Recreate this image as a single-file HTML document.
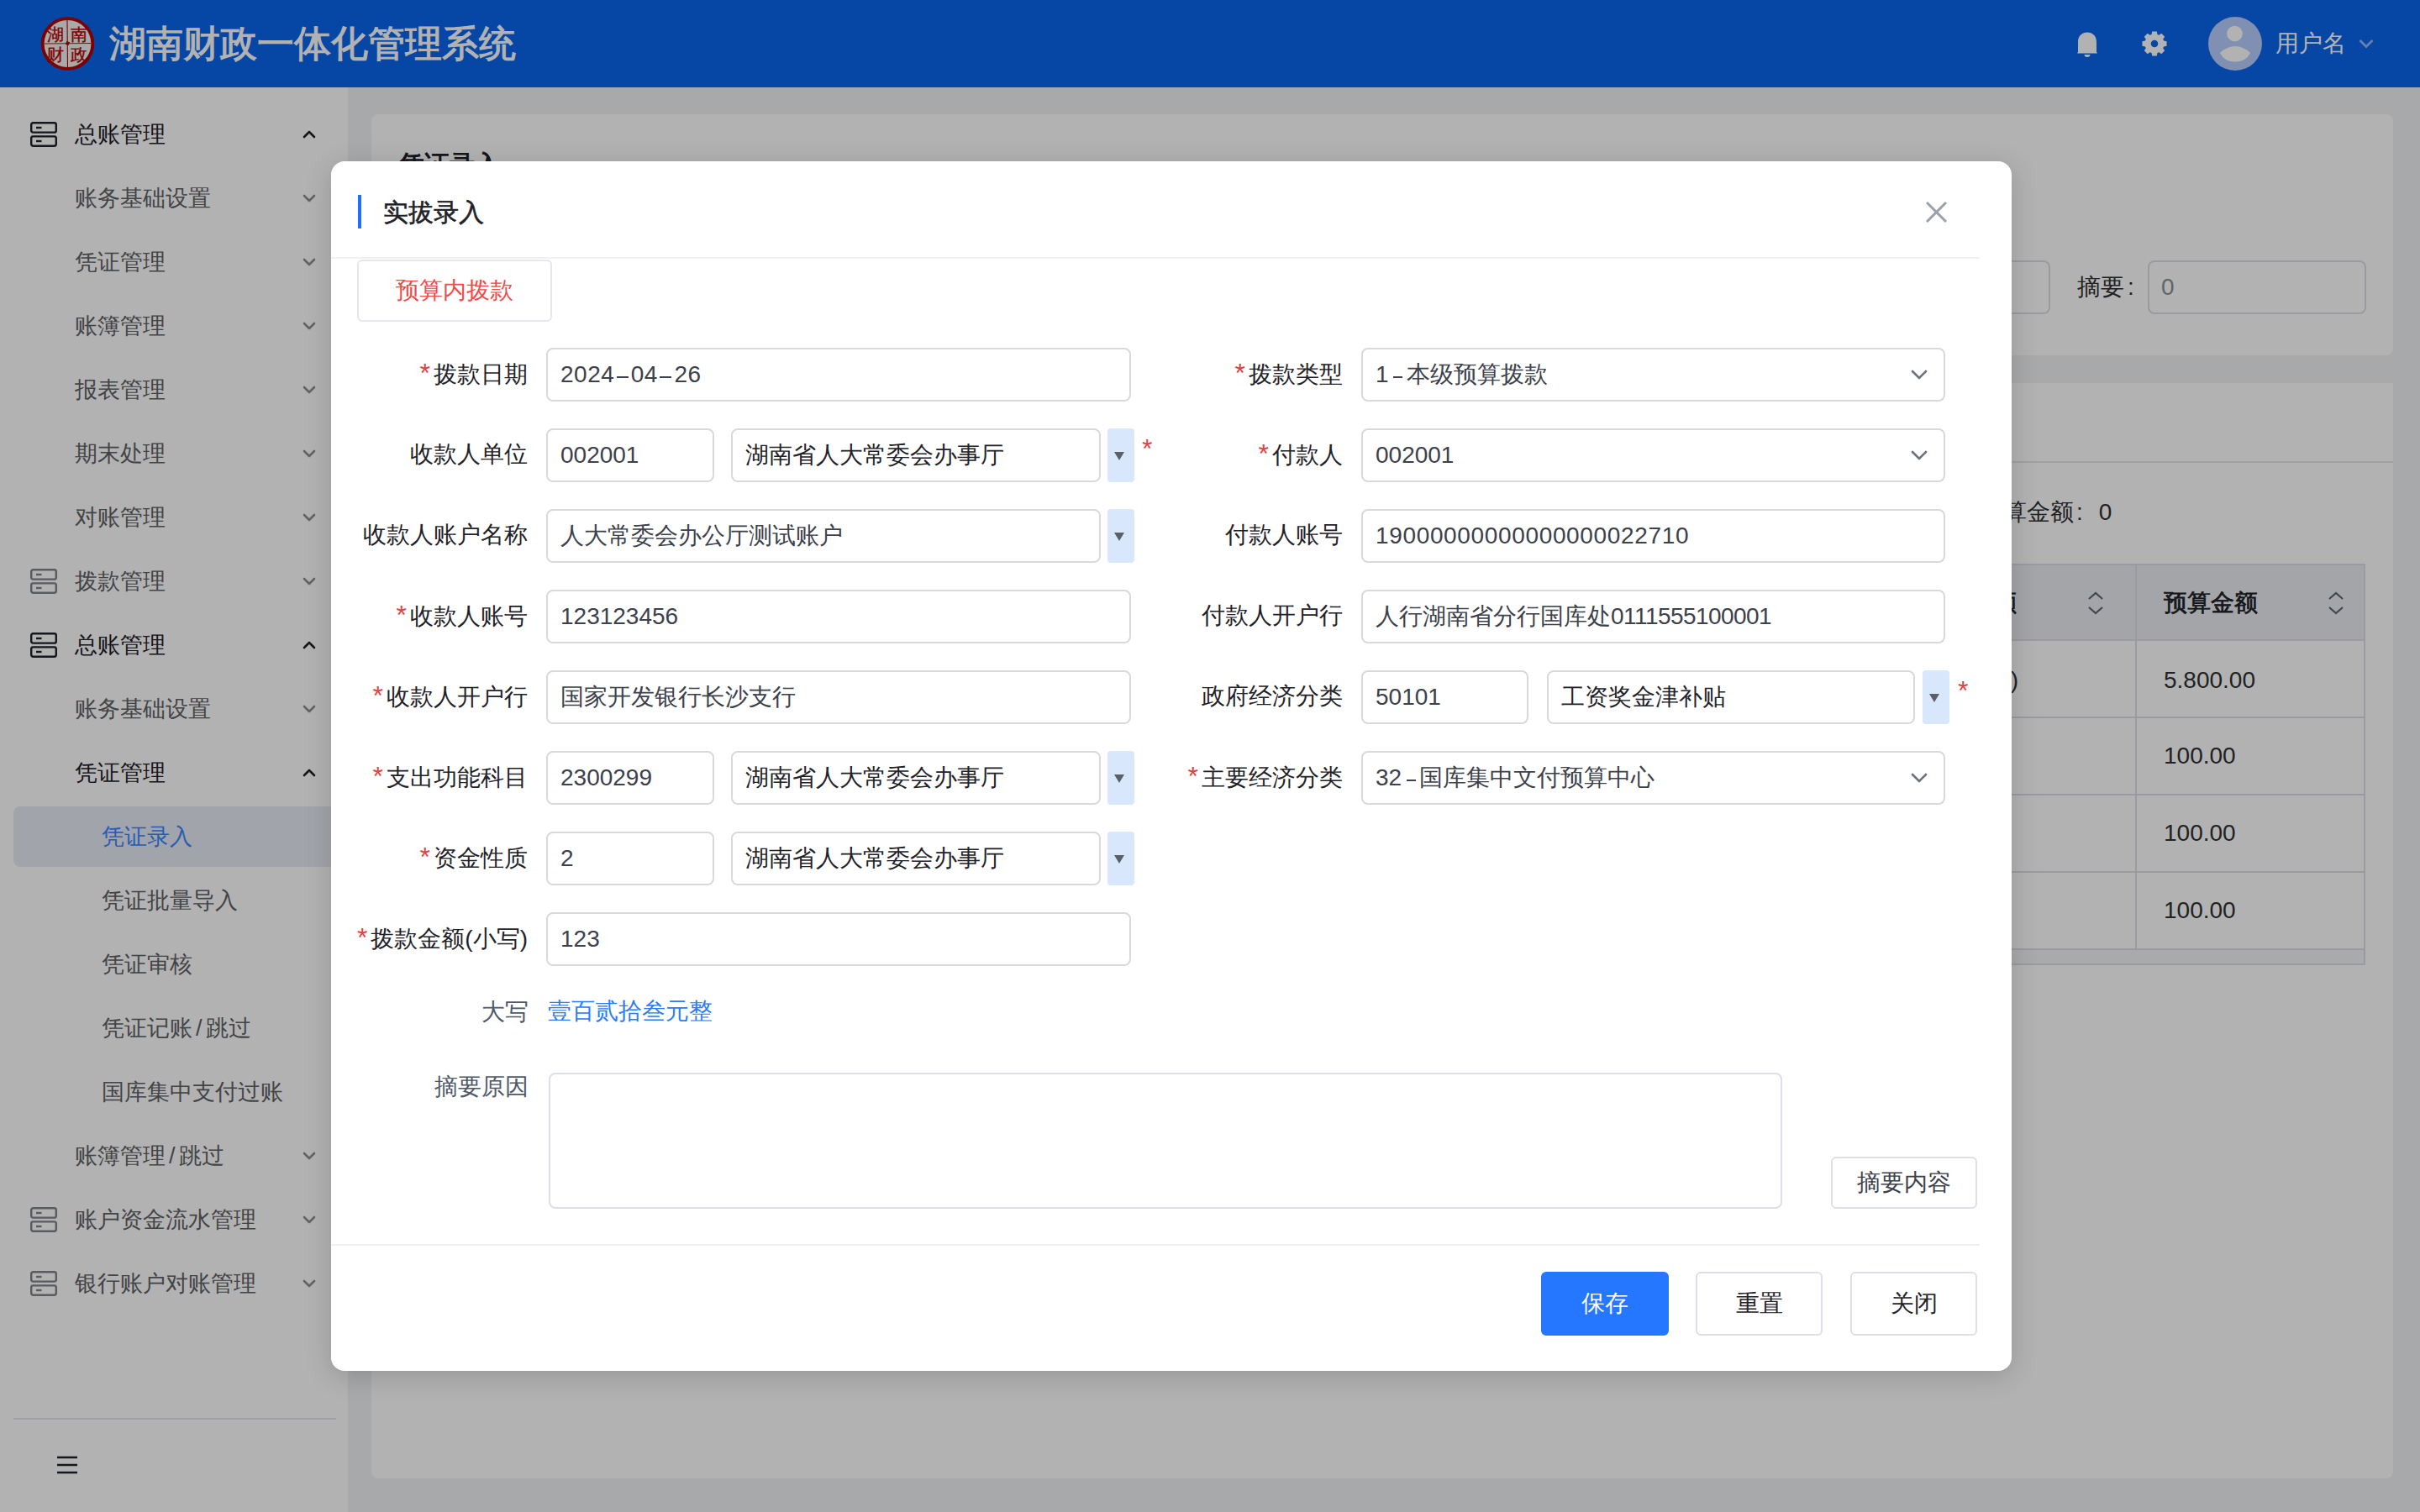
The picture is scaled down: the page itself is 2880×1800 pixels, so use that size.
<!DOCTYPE html>
<html><head><meta charset="utf-8"><title>实拔录入</title>
<style>
*{box-sizing:border-box;margin:0;padding:0}
html,body{width:2880px;height:1800px;overflow:hidden}
body{position:relative;background:#f0f2f5;font-family:"Liberation Sans",sans-serif;color:#1f2329}
.a{position:absolute}
#hdr{position:absolute;left:0;top:0;width:2880px;height:104px;background:#0a65ed}
#title{position:absolute;left:130px;top:22px;height:60px;line-height:60px;font-size:44px;color:#fff;-webkit-text-stroke:1.1px #fff;white-space:nowrap}
#uname{position:absolute;left:2708px;top:32px;height:40px;line-height:40px;font-size:28px;color:#fff;white-space:nowrap}
#side{position:absolute;left:0;top:104px;width:416px;height:1696px;background:#fff;border-right:2px solid #f3f3f3}
.mi{position:absolute;height:76px;line-height:76px;font-size:27px;white-space:nowrap}
.mi.dark{color:#1d2129}
.mi.gray{color:#606266}
.mi.active{color:#3a86ff}
.mact{position:absolute;left:16px;width:400px;height:72px;background:#e7ecf5;border-radius:8px 0 0 8px}
.micon{position:absolute;left:36px;fill:none;stroke-width:2.4}
.micon.dark{stroke:#1d2129}
.micon.gray{stroke:#7f848c}
.chev{position:absolute;left:360px;fill:none;stroke-width:2.6;stroke-linecap:round;stroke-linejoin:round}
.chev.dark{stroke:#1d2129}
.chev.gray{stroke:#8a8f97}
#mask{position:absolute;left:0;top:0;width:2880px;height:1800px;background:rgba(0,0,0,0.3)}
.card{position:absolute;background:#fff;border-radius:8px}
#modal{position:absolute;left:394px;top:192px;width:2000px;height:1440px;background:#fff;border-radius:16px;box-shadow:0 6px 32px rgba(0,0,0,0.17)}
.lbl{position:absolute;height:64px;line-height:61px;font-size:28px;color:#1f2329;text-align:right;white-space:nowrap}
.req{color:#dc4444;font-size:32px;margin-right:4px}
.inp{position:absolute;height:64px;border:2px solid #d9d9d9;border-radius:8px;background:#fff;line-height:60px;padding-left:15px;font-size:28px;color:#3c414b;white-space:nowrap;overflow:hidden}
.inp.dk{color:#1f2329}
.ddb{position:absolute;width:32px;height:64px;background:#d9e7fd;border-radius:4px}
.ddb:after{content:"";position:absolute;left:8px;top:28px;border-left:6.5px solid transparent;border-right:6.5px solid transparent;border-top:10px solid #5b5f6a}
.dh{display:inline-block;height:2.2px;background:currentColor;vertical-align:middle;position:relative;top:1px}
.star{position:absolute;font-size:32px;color:#dc4444;line-height:28px}
.sel{position:absolute;fill:none;stroke:#6b7280;stroke-width:2.6;stroke-linecap:round;stroke-linejoin:round}
.btn{position:absolute;height:76px;line-height:72px;border:2px solid #dcdfe6;border-radius:6px;text-align:center;font-size:28px;color:#1f2329;background:#fff}
</style></head><body>
<div id="hdr">
<svg class="a" style="left:48px;top:20px" width="65" height="65" viewBox="0 0 65 65">
<circle cx="32.5" cy="32" r="29.8" fill="#f2f2f2" stroke="#b40000" stroke-width="3.8"/>
<line x1="32" y1="4" x2="32.5" y2="61" stroke="#b40000" stroke-width="1.1"/>
<line x1="5" y1="32" x2="60" y2="31.5" stroke="#b40000" stroke-width="0.9"/>
<g font-family="serif" font-size="20" fill="#b40000" stroke="#b40000" stroke-width="0.35" text-anchor="middle">
<text x="18" y="28">湖</text><text x="46" y="28">南</text><text x="18" y="52">财</text><text x="46" y="52">政</text>
</g>
<rect x="30.5" y="29.5" width="4" height="4" fill="#b40000" transform="rotate(20 32.5 31.5)"/>
</svg>
<div id="title">湖南财政一体化管理系统</div>
<svg class="a" style="left:2470px;top:36px" width="28" height="34" viewBox="0 0 28 34">
<path d="M3 26 L3 14 C3 6.5 8 2.5 14 2.5 C20 2.5 25 6.5 25 14 L25 26 L25.8 27 L25.8 27.5 L2.2 27.5 L2.2 27 Z" fill="#fff"/>
<path d="M10.5 29 L17.5 29 C17.5 31 16 32 14 32 C12 32 10.5 31 10.5 29 Z" fill="#fff"/>
</svg>
<svg class="a" style="left:2548px;top:36px" width="32" height="32" viewBox="0 0 32 32" id="gear"><path d="M12.57 4.92 L13.20 1.47 L18.80 1.47 L19.43 4.92 L21.41 5.74 L24.30 3.75 L28.25 7.70 L26.26 10.59 L27.08 12.57 L30.53 13.20 L30.53 18.80 L27.08 19.43 L26.26 21.41 L28.25 24.30 L24.30 28.25 L21.41 26.26 L19.43 27.08 L18.80 30.53 L13.20 30.53 L12.57 27.08 L10.59 26.26 L7.70 28.25 L3.75 24.30 L5.74 21.41 L4.92 19.43 L1.47 18.80 L1.47 13.20 L4.92 12.57 L5.74 10.59 L3.75 7.70 L7.70 3.75 L10.59 5.74 Z M20.3 16 A4.3 4.3 0 1 0 11.7 16 A4.3 4.3 0 1 0 20.3 16 Z" fill="#fff" fill-rule="evenodd"/></svg>
<svg class="a" style="left:2628px;top:20px" width="64" height="64" viewBox="0 0 64 64">
<circle cx="32" cy="32" r="32" fill="#b6cfff"/>
<circle cx="31.5" cy="20" r="9.3" fill="#fff"/>
<path d="M13.7 43 Q32 27 50.3 43 Q44 54 32 53.6 Q20 54 13.7 43 Z" fill="#fff"/>
</svg>
<div id="uname">用户名</div>
<svg class="a" style="left:2806px;top:45px" width="20" height="14" viewBox="0 0 20 14"><path d="M2.5 3 L10 10.5 L17.5 3" fill="none" stroke="#fff" stroke-opacity="0.55" stroke-width="2.8"/></svg>
</div>
<div id="side"></div>
<svg class="micon dark" style="top:145px" width="32" height="30" viewBox="0 0 32 30"><rect x="1.2" y="1.2" width="29.6" height="11.4" rx="2.2"/><rect x="1.2" y="17.4" width="29.6" height="11.4" rx="2.2"/><line x1="7" y1="7" x2="13.5" y2="7"/><line x1="7" y1="23" x2="13.5" y2="23"/></svg><div class="mi dark" style="top:122px;left:89px">总账管理</div><svg class="chev dark" style="top:154px" width="16" height="12" viewBox="0 0 16 12"><path d="M2 9 L8 3 L14 9"/></svg>
<div class="mi gray" style="top:198px;left:89px">账务基础设置</div><svg class="chev gray" style="top:230px" width="16" height="12" viewBox="0 0 16 12"><path d="M2 3 L8 9 L14 3"/></svg>
<div class="mi gray" style="top:274px;left:89px">凭证管理</div><svg class="chev gray" style="top:306px" width="16" height="12" viewBox="0 0 16 12"><path d="M2 3 L8 9 L14 3"/></svg>
<div class="mi gray" style="top:350px;left:89px">账簿管理</div><svg class="chev gray" style="top:382px" width="16" height="12" viewBox="0 0 16 12"><path d="M2 3 L8 9 L14 3"/></svg>
<div class="mi gray" style="top:426px;left:89px">报表管理</div><svg class="chev gray" style="top:458px" width="16" height="12" viewBox="0 0 16 12"><path d="M2 3 L8 9 L14 3"/></svg>
<div class="mi gray" style="top:502px;left:89px">期末处理</div><svg class="chev gray" style="top:534px" width="16" height="12" viewBox="0 0 16 12"><path d="M2 3 L8 9 L14 3"/></svg>
<div class="mi gray" style="top:578px;left:89px">对账管理</div><svg class="chev gray" style="top:610px" width="16" height="12" viewBox="0 0 16 12"><path d="M2 3 L8 9 L14 3"/></svg>
<svg class="micon gray" style="top:677px" width="32" height="30" viewBox="0 0 32 30"><rect x="1.2" y="1.2" width="29.6" height="11.4" rx="2.2"/><rect x="1.2" y="17.4" width="29.6" height="11.4" rx="2.2"/><line x1="7" y1="7" x2="13.5" y2="7"/><line x1="7" y1="23" x2="13.5" y2="23"/></svg><div class="mi gray" style="top:654px;left:89px">拨款管理</div><svg class="chev gray" style="top:686px" width="16" height="12" viewBox="0 0 16 12"><path d="M2 3 L8 9 L14 3"/></svg>
<svg class="micon dark" style="top:753px" width="32" height="30" viewBox="0 0 32 30"><rect x="1.2" y="1.2" width="29.6" height="11.4" rx="2.2"/><rect x="1.2" y="17.4" width="29.6" height="11.4" rx="2.2"/><line x1="7" y1="7" x2="13.5" y2="7"/><line x1="7" y1="23" x2="13.5" y2="23"/></svg><div class="mi dark" style="top:730px;left:89px">总账管理</div><svg class="chev dark" style="top:762px" width="16" height="12" viewBox="0 0 16 12"><path d="M2 9 L8 3 L14 9"/></svg>
<div class="mi gray" style="top:806px;left:89px">账务基础设置</div><svg class="chev gray" style="top:838px" width="16" height="12" viewBox="0 0 16 12"><path d="M2 3 L8 9 L14 3"/></svg>
<div class="mi dark" style="top:882px;left:89px">凭证管理</div><svg class="chev dark" style="top:914px" width="16" height="12" viewBox="0 0 16 12"><path d="M2 9 L8 3 L14 9"/></svg>
<div class="mact" style="top:960px"></div><div class="mi active" style="top:958px;left:121px">凭证录入</div>
<div class="mi gray" style="top:1034px;left:121px">凭证批量导入</div>
<div class="mi gray" style="top:1110px;left:121px">凭证审核</div>
<div class="mi gray" style="top:1186px;left:121px">凭证记账<span style="margin:0 4px">/</span>跳过</div>
<div class="mi gray" style="top:1262px;left:121px">国库集中支付过账</div>
<div class="mi gray" style="top:1338px;left:89px">账簿管理<span style="margin:0 4px">/</span>跳过</div><svg class="chev gray" style="top:1370px" width="16" height="12" viewBox="0 0 16 12"><path d="M2 3 L8 9 L14 3"/></svg>
<svg class="micon gray" style="top:1437px" width="32" height="30" viewBox="0 0 32 30"><rect x="1.2" y="1.2" width="29.6" height="11.4" rx="2.2"/><rect x="1.2" y="17.4" width="29.6" height="11.4" rx="2.2"/><line x1="7" y1="7" x2="13.5" y2="7"/><line x1="7" y1="23" x2="13.5" y2="23"/></svg><div class="mi gray" style="top:1414px;left:89px">账户资金流水管理</div><svg class="chev gray" style="top:1446px" width="16" height="12" viewBox="0 0 16 12"><path d="M2 3 L8 9 L14 3"/></svg>
<svg class="micon gray" style="top:1513px" width="32" height="30" viewBox="0 0 32 30"><rect x="1.2" y="1.2" width="29.6" height="11.4" rx="2.2"/><rect x="1.2" y="17.4" width="29.6" height="11.4" rx="2.2"/><line x1="7" y1="7" x2="13.5" y2="7"/><line x1="7" y1="23" x2="13.5" y2="23"/></svg><div class="mi gray" style="top:1490px;left:89px">银行账户对账管理</div><svg class="chev gray" style="top:1522px" width="16" height="12" viewBox="0 0 16 12"><path d="M2 3 L8 9 L14 3"/></svg>
<div class="card" style="left:442px;top:136px;width:2406px;height:287px">
<div class="a" style="left:33px;top:38px;font-size:30px;font-weight:bold;color:#1d2129;line-height:44px;white-space:nowrap">凭证录入</div>
<div class="a" style="left:1900px;top:174px;width:98px;height:64px;border:2px solid #dcdfe6;border-radius:8px"></div>
<div class="a" style="left:2030px;top:174px;height:64px;line-height:64px;font-size:28px;color:#303133;white-space:nowrap">摘要<span style="margin-left:4px">:</span></div>
<div class="a" style="left:2114px;top:174px;width:260px;height:64px;border:2px solid #dcdfe6;border-radius:8px;line-height:60px;padding-left:14px;font-size:28px;color:#8a9099">0</div>
</div>
<div class="card" style="left:442px;top:456px;width:2406px;height:1304px;border-radius:0 0 8px 8px">
<div class="a" style="left:0;top:93px;width:2406px;height:2px;background:#e5e6eb"></div>
<div class="a" style="left:1914px;top:130px;height:48px;line-height:48px;font-size:28px;color:#303133;white-space:nowrap">预算金额<span style="margin-left:3px">:</span><span style="margin-left:19px">0</span></div>
<div class="a" style="left:33px;top:215px;width:2340px;height:478px;border:2px solid #dcdfe6;background:#fff">
 <div class="a" style="left:0;top:0;width:2336px;height:90px;background:#eaedf1;border-bottom:2px solid #dcdfe6"></div>
 <div class="a" style="left:2064px;top:0;width:2px;height:456px;background:#dcdfe6"></div>
 <div class="a" style="left:1700px;top:0;width:2px;height:456px;background:#dcdfe6"></div>
 <div class="a" style="left:2098px;top:0;height:90px;line-height:90px;font-size:28px;-webkit-text-stroke:0.7px #1d2129;color:#1d2129;white-space:nowrap">预算金额</div>
 <svg class="a" style="left:2292px;top:30px" width="22" height="30" viewBox="0 0 22 30"><path d="M3 10 L11 3 L19 10 M3 20 L11 27 L19 20" fill="none" stroke="#5f6672" stroke-width="2.2"/></svg>
 <svg class="a" style="left:2006px;top:30px" width="22" height="30" viewBox="0 0 22 30"><path d="M3 10 L11 3 L19 10 M3 20 L11 27 L19 20" fill="none" stroke="#5f6672" stroke-width="2.2"/></svg>
 <div class="a" style="left:0;top:180px;width:2336px;height:2px;background:#dcdfe6"></div>
 <div class="a" style="left:0;top:272px;width:2336px;height:2px;background:#dcdfe6"></div>
 <div class="a" style="left:0;top:364px;width:2336px;height:2px;background:#dcdfe6"></div>
 <div class="a" style="left:0;top:456px;width:2336px;height:2px;background:#dcdfe6"></div>
 <div class="a" style="left:0;top:458px;width:2336px;height:16px;background:#f3f4f6"></div>
 <div class="a" style="left:2098px;top:92px;height:90px;line-height:90px;font-size:28px;color:#303133">5.800.00</div>
 <div class="a" style="left:2098px;top:182px;height:90px;line-height:90px;font-size:28px;color:#303133">100.00</div>
 <div class="a" style="left:2098px;top:274px;height:90px;line-height:90px;font-size:28px;color:#303133">100.00</div>
 <div class="a" style="left:2098px;top:366px;height:90px;line-height:90px;font-size:28px;color:#303133">100.00</div>
 <div class="a" style="left:1600px;top:92px;width:325px;text-align:right;height:90px;line-height:90px;font-size:28px;color:#303133;white-space:nowrap">(0.00)</div>
 <div class="a" style="left:1600px;top:0;width:323px;text-align:right;height:90px;line-height:90px;font-size:28px;-webkit-text-stroke:0.7px #1d2129;color:#1d2129;white-space:nowrap">金额</div>
</div>
</div>
<div class="a" style="left:16px;top:1688px;width:384px;height:2px;background:#e5e6eb"></div>
<svg class="a" style="left:66px;top:1732px" width="28" height="24" viewBox="0 0 28 24"><path d="M2 3 H26 M2 12 H26 M2 21 H26" stroke="#1d2129" stroke-width="2.4"/></svg>

<div id="mask"></div>
<div id="modal">
<div class="a" style="left:32px;top:40px;width:4px;height:40px;background:#1f6fff"></div>
<div class="a" style="left:62px;top:38px;height:46px;line-height:46px;font-size:30px;-webkit-text-stroke:0.6px #1f2329;color:#1f2329;white-space:nowrap">实拔录入</div>
<svg class="a" style="left:1896px;top:46px" width="29" height="29" viewBox="0 0 29 29"><path d="M3 3 L26 26 M26 3 L3 26" stroke="#9aa1ad" stroke-width="3"/></svg>
<div class="a" style="left:0;top:114px;width:1962px;height:2px;background:#eef0f5"></div>
<div class="a" style="left:31px;top:117px;width:232px;height:74px;border:2px solid #e4e7ed;border-radius:6px;text-align:center;line-height:70px;font-size:28px;color:#f24a4a">预算内拨款</div>
<div class="lbl " style="right:1766px;top:222px"><span class="req">*</span>拨款日期</div>
<div class="inp" style="left:256px;top:222px;width:696px"><span style="letter-spacing:0.5px">2024<span class="dh" style="width:14px;margin:0 3px 0 2.5px"></span>04<span class="dh" style="width:14px;margin:0 3px 0 2.5px"></span>26</span></div>
<div class="lbl " style="right:1766px;top:318px">收款人单位</div>
<div class="inp" style="left:256px;top:318px;width:200px">002001</div>
<div class="inp dk" style="left:476px;top:318px;width:440px">湖南省人大常委会办事厅</div>
<div class="ddb" style="left:924px;top:318px"></div>
<div class="star" style="left:965px;top:328px">*</div>
<div class="lbl " style="right:1766px;top:414px">收款人账户名称</div>
<div class="inp" style="left:256px;top:414px;width:660px">人大常委会办公厅测试账户</div>
<div class="ddb" style="left:924px;top:414px"></div>
<div class="lbl " style="right:1766px;top:510px"><span class="req">*</span>收款人账号</div>
<div class="inp" style="left:256px;top:510px;width:696px">123123456</div>
<div class="lbl " style="right:1766px;top:606px"><span class="req">*</span>收款人开户行</div>
<div class="inp" style="left:256px;top:606px;width:696px">国家开发银行长沙支行</div>
<div class="lbl " style="right:1766px;top:702px"><span class="req">*</span>支出功能科目</div>
<div class="inp" style="left:256px;top:702px;width:200px">2300299</div>
<div class="inp dk" style="left:476px;top:702px;width:440px">湖南省人大常委会办事厅</div>
<div class="ddb" style="left:924px;top:702px"></div>
<div class="lbl " style="right:1766px;top:798px"><span class="req">*</span>资金性质</div>
<div class="inp" style="left:256px;top:798px;width:200px">2</div>
<div class="inp dk" style="left:476px;top:798px;width:440px">湖南省人大常委会办事厅</div>
<div class="ddb" style="left:924px;top:798px"></div>
<div class="lbl " style="right:1766px;top:894px"><span class="req">*</span>拨款金额(小写)</div>
<div class="inp" style="left:256px;top:894px;width:696px">123</div>
<div class="lbl " style="right:796px;top:222px"><span class="req">*</span>拨款类型</div>
<div class="inp" style="left:1226px;top:222px;width:695px">1<span class="dh" style="width:11px;margin:0 5px 0 5px"></span>本级预算拨款</div>
<svg class="sel" style="left:1880px;top:248px" width="20" height="12" viewBox="0 0 20 12"><path d="M2 2 L10 10 L18 2"/></svg>
<div class="lbl " style="right:796px;top:318px"><span class="req">*</span>付款人</div>
<div class="inp" style="left:1226px;top:318px;width:695px">002001</div>
<svg class="sel" style="left:1880px;top:344px" width="20" height="12" viewBox="0 0 20 12"><path d="M2 2 L10 10 L18 2"/></svg>
<div class="lbl " style="right:796px;top:414px">付款人账号</div>
<div class="inp" style="left:1226px;top:414px;width:695px"><span style="letter-spacing:0.65px">19000000000000000022710</span></div>
<div class="lbl " style="right:796px;top:510px">付款人开户行</div>
<div class="inp" style="left:1226px;top:510px;width:695px">人行湖南省分行国库处<span style="letter-spacing:-0.55px">0111555100001</span></div>
<div class="lbl " style="right:796px;top:606px">政府经济分类</div>
<div class="inp" style="left:1226px;top:606px;width:199px">50101</div>
<div class="inp dk" style="left:1447px;top:606px;width:438px">工资奖金津补贴</div>
<div class="ddb" style="left:1894px;top:606px"></div>
<div class="star" style="left:1936px;top:616px">*</div>
<div class="lbl " style="right:796px;top:702px"><span class="req">*</span>主要经济分类</div>
<div class="inp" style="left:1226px;top:702px;width:695px">32<span class="dh" style="width:11px;margin:0 4px 0 6px"></span>国库集中文付预算中心</div>
<svg class="sel" style="left:1880px;top:728px" width="20" height="12" viewBox="0 0 20 12"><path d="M2 2 L10 10 L18 2"/></svg>
<div class="lbl" style="right:1765px;top:982px;color:#4e5969">大写</div>
<div class="a" style="left:258px;top:980px;height:64px;line-height:64px;font-size:28px;color:#2b7cf6;white-space:nowrap">壹百贰拾叁元整</div>
<div class="lbl" style="right:1765px;top:1071px;color:#4e5969">摘要原因</div>
<div class="a" style="left:259px;top:1085px;width:1468px;height:162px;border:2px solid #dcdfe6;border-radius:8px"></div>
<div class="btn" style="left:1785px;top:1185px;width:174px;height:62px;line-height:58px;color:#3c414b">摘要内容</div>
<div class="a" style="left:0;top:1289px;width:1962px;height:2px;background:#eef0f5"></div>
<div class="btn" style="left:1440px;top:1322px;width:152px;background:#2577ff;border-color:#2577ff;color:#fff">保存</div>
<div class="btn" style="left:1624px;top:1322px;width:151px">重置</div>
<div class="btn" style="left:1808px;top:1322px;width:151px">关闭</div>
</div>
</body></html>
